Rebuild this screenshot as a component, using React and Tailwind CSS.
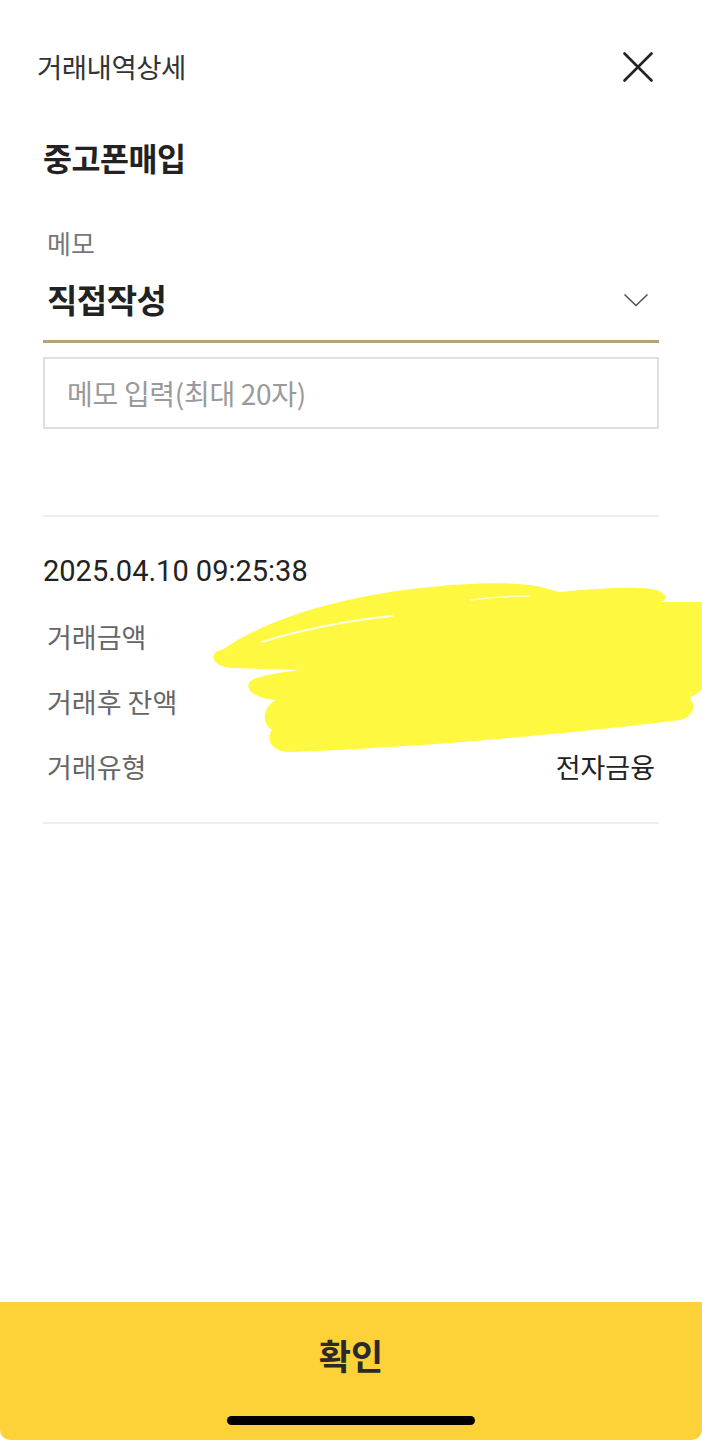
import React from "react";

const KR = { fontFamily: "'Noto Sans CJK KR', 'Noto Sans', sans-serif" };

function Scribble() {
  return (
    <svg
      className="absolute left-0 top-0 pointer-events-none"
      width="702"
      height="1440"
      viewBox="0 0 702 1440"
    >
      <path
        d="M222 650 C 262 622, 332 598, 420 588 C 482 581, 530 582, 548 589 L 560 592 C 600 588, 640 586, 656 590 C 668 594, 668 600, 660 602 L 702 602 L 702 690 L 690 698 C 696 706, 694 716, 680 720 C 600 730, 450 746, 292 752 C 270 753, 266 738, 272 730 C 260 722, 264 706, 276 700 C 250 698, 243 686, 252 680 C 264 674, 288 672, 298 670 L 232 668 C 208 666, 210 651, 222 650 Z"
        fill="#fef841"
      />
      <path
        d="M262 642 C 300 630, 350 620, 392 616"
        stroke="#ffffff"
        strokeWidth="2"
        fill="none"
        strokeLinecap="round"
        opacity="0.85"
      />
      <path
        d="M470 600 C 495 597, 515 596, 530 596"
        stroke="#ffffff"
        strokeWidth="1.5"
        fill="none"
        strokeLinecap="round"
        opacity="0.7"
      />
    </svg>
  );
}

export default function App() {
  return (
    <div
      className="relative w-[702px] h-[1440px] bg-white overflow-hidden flex flex-col"
      style={KR}
    >
      {/* Header */}
      <div className="h-[134px] flex items-center justify-between pl-[37px] pr-[49px] shrink-0">
        <span className="text-[27.5px] leading-none text-[#333] tracking-[-0.5px]">
          거래내역상세
        </span>
        <svg width="30" height="30" viewBox="0 0 30 30">
          <path
            d="M1.5 1.5 L28.5 28.5 M28.5 1.5 L1.5 28.5"
            stroke="#222"
            strokeWidth="2.6"
            strokeLinecap="round"
          />
        </svg>
      </div>

      <div className="px-[43px] flex flex-col shrink-0">
        <div className="h-[48px] flex items-center text-[31.5px] font-bold text-[#222] tracking-[-0.5px]">
          중고폰매입
        </div>

        <div className="mt-[42px] h-[36px] flex items-center pl-[4px] text-[26px] text-[#777]">
          메모
        </div>

        <div className="h-[83px] flex items-center justify-between pl-[4px] pr-[10px] border-b-[3px] border-[#b9a17b]">
          <span className="text-[33px] font-bold text-[#222] tracking-[-0.5px]">
            직접작성
          </span>
          <svg width="26" height="14" viewBox="0 0 26 14">
            <path
              d="M1.5 1.5 L13 12.5 L24.5 1.5"
              stroke="#555"
              strokeWidth="1.6"
              fill="none"
              strokeLinejoin="round"
            />
          </svg>
        </div>

        <div className="mt-[14px] h-[72px] border-2 border-[#e0e0e0] flex items-center pl-[22px] text-[28px] text-[#9a9a9a] tracking-[-0.3px]">
          메모 입력(최대 20자)
        </div>

        <div className="mt-[86px] h-[2px] bg-[#eeeeee]" />

        <div
          className="mt-[35px] h-[40px] flex items-center text-[29px] text-[#222]"
          style={{ fontFamily: "Roboto, 'Noto Sans CJK KR', sans-serif" }}
        >
          2025.04.10 09:25:38
        </div>

        <div className="mt-[13px] flex flex-col">
          <div className="h-[65px] flex items-center justify-between pl-[4px] pr-[4px]">
            <span className="text-[27px] text-[#666]">거래금액</span>
            <span className="text-[27px] text-[#222]"></span>
          </div>
          <div className="h-[65px] flex items-center justify-between pl-[4px] pr-[4px]">
            <span className="text-[27px] text-[#666]">거래후 잔액</span>
            <span className="text-[27px] text-[#222]"></span>
          </div>
          <div className="h-[65px] flex items-center justify-between pl-[4px] pr-[4px]">
            <span className="text-[27px] text-[#666]">거래유형</span>
            <span className="text-[27px] text-[#222]">전자금융</span>
          </div>
        </div>

        <div className="mt-[22px] h-[2px] bg-[#eeeeee]" />
      </div>

      {/* Bottom button */}
      <div className="mt-auto h-[138px] bg-[#fdd239] rounded-b-[10px] flex flex-col items-center shrink-0">
        <div className="mt-[32px] h-[42px] flex items-center text-[35px] font-bold text-[#2a2a2a]">
          확인
        </div>
        <div className="mt-[40px] w-[248px] h-[9px] rounded-full bg-black" />
      </div>

      <Scribble />
    </div>
  );
}
